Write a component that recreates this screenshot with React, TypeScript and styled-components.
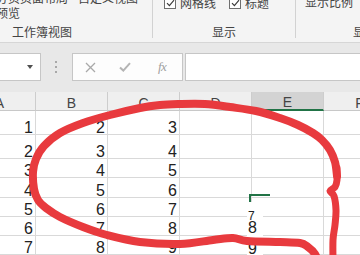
import React from "react";
import styled, { createGlobalStyle } from "styled-components";

const GlobalStyle = createGlobalStyle`
  * {
    box-sizing: border-box;
  }

  html, body {
    margin: 0;
    padding: 0;
  }

  body {
    width: 360px;
    height: 255px;
    overflow: hidden;
    background: #ffffff;
    font-family: "Noto Sans CJK SC", "Liberation Sans", sans-serif;
  }
`;

const Page = styled.div`
  position: relative;
  width: 360px;
  height: 255px;
  overflow: hidden;
  display: flex;
  flex-direction: column;
`;

/* ---------- ribbon ---------- */

const Ribbon = styled.div`
  display: flex;
  flex: none;
  height: 43px;
  background: #f4f4f4;
  border-bottom: 1px solid #d6d6d6;
  overflow: hidden;
  color: #444444;
  font-size: 12px;
`;

const Group = styled.div<{ $width?: number }>`
  display: flex;
  flex-direction: column;
  flex: ${(p) => (p.$width ? "none" : "1")};
  width: ${(p) => (p.$width ? `${p.$width}px` : "auto")};
  white-space: nowrap;
`;

const GroupBody = styled.div<{ $left: number; $top: number; $line?: number }>`
  display: flex;
  align-items: center;
  margin-left: ${(p) => p.$left}px;
  margin-top: ${(p) => p.$top}px;
  line-height: ${(p) => p.$line ?? 13}px;
`;

const GroupLabel = styled.div<{ $left: number }>`
  margin-top: auto;
  padding-left: ${(p) => p.$left}px;
  padding-bottom: 3px;
  line-height: 14px;
`;

const Divider = styled.div`
  flex: none;
  width: 1px;
  margin-bottom: 4px;
  background: #d2d2d2;
`;

const ViewButton = styled.div<{ $gap: number }>`
  display: flex;
  flex-direction: column;
  align-items: center;
  margin-left: ${(p) => p.$gap}px;
`;

const CheckBox = styled.span<{ $gap: number }>`
  display: flex;
  align-items: center;
  justify-content: center;
  width: 12px;
  height: 12px;
  margin-left: ${(p) => p.$gap}px;
  margin-right: 4px;
  background: #ffffff;
  border: 1px solid #6f6f6f;
`;

function Check(): JSX.Element {
  return (
    <svg width="9" height="8" viewBox="0 0 9 8">
      <path d="M1 4.2 L3.4 6.6 L8 1.2" fill="none" stroke="#3a3a3a" strokeWidth="1.2" />
    </svg>
  );
}

/* ---------- formula bar ---------- */

const FormulaBar = styled.div`
  display: flex;
  flex: none;
  align-items: center;
  height: 49px;
  padding-bottom: 1px;
  background: #e8e8e8;
`;

const NameBox = styled.div`
  display: flex;
  align-items: center;
  justify-content: flex-end;
  width: 41px;
  height: 28px;
  padding-right: 7px;
  background: #ffffff;
  border: 1px solid #c6c6c6;
  border-left: none;
`;

const DropArrow = styled.span`
  width: 0;
  height: 0;
  border-left: 3.5px solid transparent;
  border-right: 3.5px solid transparent;
  border-top: 4px solid #505050;
`;

const Grip = styled.div`
  display: flex;
  flex-direction: column;
  gap: 3px;
  margin-left: 14px;
  margin-right: 15px;
`;

const GripDot = styled.span`
  width: 2px;
  height: 2px;
  background: #a8a8a8;
`;

const ToolBox = styled.div`
  display: flex;
  align-items: center;
  width: 111px;
  height: 28px;
  padding-left: 12px;
  background: #fdfdfd;
  border: 1px solid #c6c6c6;
`;

const ToolIcon = styled.span<{ $gap: number }>`
  display: flex;
  margin-left: ${(p) => p.$gap}px;
`;

const Fx = styled.span`
  margin-left: 27px;
  font-family: "Liberation Serif", serif;
  font-style: italic;
  font-size: 13px;
  color: #a0a0a0;
  letter-spacing: -0.5px;
`;

const FormulaInput = styled.div`
  flex: 1;
  height: 28px;
  margin-left: 2px;
  margin-right: -4px;
  background: #ffffff;
  border: 1px solid #c6c6c6;
`;

/* ---------- sheet ---------- */

const Sheet = styled.div`
  position: relative;
  flex: 1;
  overflow: hidden;
  background: #ffffff;
`;

const Grid = styled.div`
  display: grid;
  grid-template-columns: repeat(6, 72px);
  grid-template-rows: 19px 24px 24px 19px 20px 19px 19px 19px;
  margin-left: -36px;
  width: 432px;
  font-family: "Liberation Sans", Arial, sans-serif;
`;

const HeaderCell = styled.div<{ $active?: boolean }>`
  display: flex;
  align-items: flex-end;
  justify-content: center;
  padding-bottom: 1px;
  background: ${(p) => (p.$active ? "#d3d3d3" : "#efefef")};
  border-right: 1px solid #cdcdcd;
  border-bottom: ${(p) => (p.$active ? "2px solid #217346" : "1px solid #c8c8c8")};
  font-size: 14px;
  line-height: 12px;
  color: #444444;
`;

const Cell = styled.div`
  display: flex;
  align-items: flex-end;
  justify-content: flex-end;
  padding-right: 2px;
  border-right: 1px solid #d9d9d9;
  border-bottom: 1px solid #d9d9d9;
  font-size: 16px;
  line-height: 12px;
  color: #222222;
`;

const SelectionCorner = styled.div`
  position: absolute;
  left: 249px;
  top: 102px;
  width: 21px;
  height: 8px;
  border-top: 2px solid #217346;
  border-left: 2px solid #217346;
`;

const GlitchBox = styled.div`
  position: absolute;
  left: 247px;
  top: 110px;
  width: 16px;
  height: 60px;
  display: flex;
  flex-direction: column;
  align-items: flex-start;
  padding-left: 1px;
  padding-top: 9px;
  background: #ffffff;
  font-family: "Liberation Sans", Arial, sans-serif;
  color: #222222;
`;

const GlitchDigit = styled.span<{ $size: number; $line: number }>`
  font-size: ${(p) => p.$size}px;
  line-height: ${(p) => p.$line}px;
`;

const Ink = styled.svg`
  position: absolute;
  left: 0;
  top: 0;
  pointer-events: none;
`;

/* ---------- data ---------- */

const columns = ["A", "B", "C", "D", "E", "F"];
const rows = [1, 2, 3, 4, 5, 6, 7];

type Pt = [number, number];

function smoothPath(pts : Pt[]) : string {
  let d = `M ${pts[0][0]} ${pts[0][1]}`;
  for (let i = 0; i < pts.length - 1; i++) {
    const p0 = pts[i - 1] || pts[i];
    const p1 = pts[i];
    const p2 = pts[i + 1];
    const p3 = pts[i + 2] || p2;
    const c1x = p1[0] + (p2[0] - p0[0]) / 6;
    const c1y = p1[1] + (p2[1] - p0[1]) / 6;
    const c2x = p2[0] - (p3[0] - p1[0]) / 6;
    const c2y = p2[1] - (p3[1] - p1[1]) / 6;
    d += ` C ${c1x.toFixed(1)} ${c1y.toFixed(1)} ${c2x.toFixed(1)} ${c2y.toFixed(1)} ${p2[0]} ${p2[1]}`;
  }
  return d;
}

const loop : Pt[] = [
  [337, 176], [335, 162], [330, 150], [322, 140], [313, 133], [298, 125], [280, 118],
  [256, 111], [230, 107], [205, 104], [180, 104], [160, 105], [140, 108], [110, 115],
  [83, 123], [60, 133], [44, 146], [36, 159], [33, 172], [34, 189], [38, 200], [46, 208],
  [60, 217], [83, 227], [107, 235], [140, 242], [180, 244], [213, 240], [233, 238],
  [247, 241], [280, 242], [300, 243], [308, 247], [315, 254], [318, 262]
];

const tail : Pt[] = [
  [337, 168], [337, 180], [335, 187], [330, 191], [334, 196], [336, 210], [335, 225],
  [333, 240], [333, 262]
];

export default function App() : JSX.Element {
  return (
    <>
      <GlobalStyle />
      <Page>
        <Ribbon>
          <Group $width={152}>
            <GroupBody $left={-4} $top={-10} $line={15}>
              <ViewButton $gap={0}>
                <span>分页</span>
                <span>预览</span>
              </ViewButton>
              <ViewButton $gap={0}>
                <span>页面布局</span>
                <span>&nbsp;</span>
              </ViewButton>
              <ViewButton $gap={10}>
                <span>自定义视图</span>
                <span>&nbsp;</span>
              </ViewButton>
            </GroupBody>
            <GroupLabel $left={12}>工作簿视图</GroupLabel>
          </Group>
          <Divider />
          <Group $width={142}>
            <GroupBody $left={0} $top={-4}>
              <CheckBox $gap={11}>
                <Check />
              </CheckBox>
              <span>网格线</span>
              <CheckBox $gap={13}>
                <Check />
              </CheckBox>
              <span>标题</span>
            </GroupBody>
            <GroupLabel $left={59}>显示</GroupLabel>
          </Group>
          <Divider />
          <Group>
            <GroupBody $left={9} $top={-5}>
              <span>显示比例</span>
            </GroupBody>
            <GroupLabel $left={57}>显示比例</GroupLabel>
          </Group>
        </Ribbon>

        <FormulaBar>
          <NameBox>
            <DropArrow />
          </NameBox>
          <Grip>
            <GripDot />
            <GripDot />
            <GripDot />
          </Grip>
          <ToolBox>
            <ToolIcon $gap={0}>
              <svg width="11" height="11" viewBox="0 0 11 11">
                <path d="M1 1 L10 10 M10 1 L1 10" stroke="#a9a9a9" strokeWidth="1.3" />
              </svg>
            </ToolIcon>
            <ToolIcon $gap={23}>
              <svg width="12" height="10" viewBox="0 0 12 10">
                <path d="M1 5.5 L4.3 8.6 L11 1.2" fill="none" stroke="#b4b4b4" strokeWidth="2" />
              </svg>
            </ToolIcon>
            <Fx>fx</Fx>
          </ToolBox>
          <FormulaInput />
        </FormulaBar>

        <Sheet>
          <Grid>
            {columns.map((c) => (
              <HeaderCell key={c} $active={c === "E"}>{c}</HeaderCell>
            ))}
            {rows.map((r) =>
              columns.map((c, ci) => (
                <Cell key={`${c}${r}`}>{ci < 3 ? r + ci : ""}</Cell>
              ))
            )}
          </Grid>

          <SelectionCorner />
          <GlitchBox>
            <GlitchDigit $size={12} $line={10}>7</GlitchDigit>
            <GlitchDigit $size={16} $line={13}>8</GlitchDigit>
            <GlitchDigit $size={16} $line={30}>9</GlitchDigit>
          </GlitchBox>
        </Sheet>

        <Ink width="360" height="255" viewBox="0 0 360 255">
          <path d={smoothPath(loop)} fill="none" stroke="#e83a3e" strokeWidth="8" strokeLinecap="round" strokeLinejoin="round" />
          <path d={smoothPath(tail)} fill="none" stroke="#e83a3e" strokeWidth="7" strokeLinecap="round" strokeLinejoin="round" />
        </Ink>
      </Page>
    </>
  );
}
